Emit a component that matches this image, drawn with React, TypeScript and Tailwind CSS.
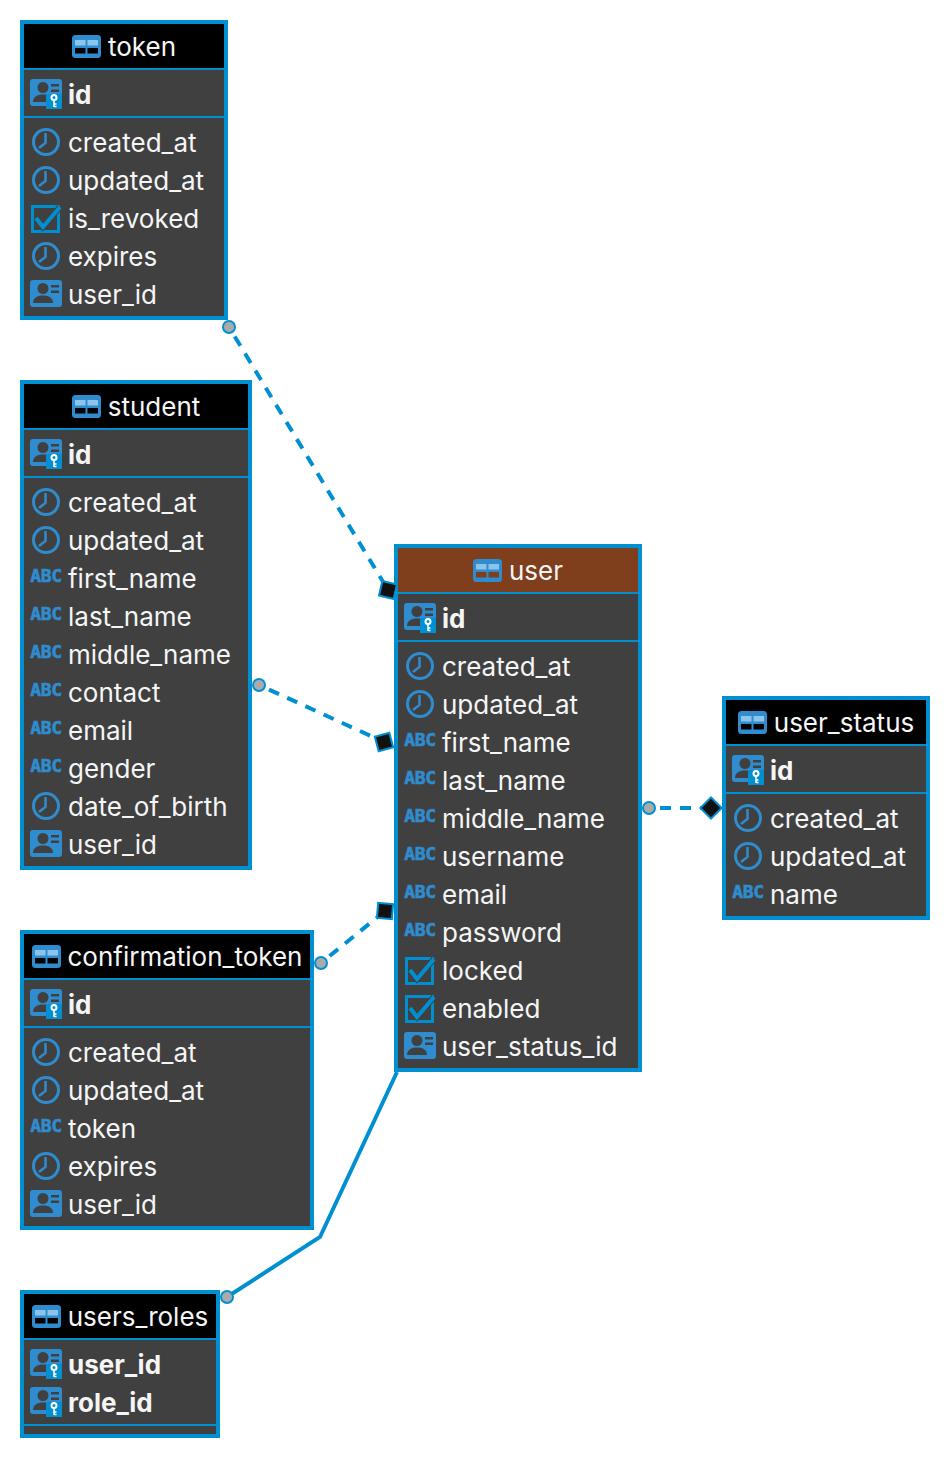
type ColumnType = "clock" | "check" | "abc" | "user";

type Column = { name: string; type: ColumnType };

type Table = {
  name: string;
  position: string;
  width: string;
  headerBg: string;
  cutout: string;
  keys: string[];
  columns: Column[];
};

const blue = "#2f8ccf";

const tables: Table[] = [
  {
    name: "token",
    position: "left-[20px] top-[20px]",
    width: "w-[208px]",
    headerBg: "bg-black",
    cutout: "#000000",
    keys: ["id"],
    columns: [
      { name: "created_at", type: "clock" },
      { name: "updated_at", type: "clock" },
      { name: "is_revoked", type: "check" },
      { name: "expires", type: "clock" },
      { name: "user_id", type: "user" },
    ],
  },
  {
    name: "student",
    position: "left-[20px] top-[380px]",
    width: "w-[232px]",
    headerBg: "bg-black",
    cutout: "#000000",
    keys: ["id"],
    columns: [
      { name: "created_at", type: "clock" },
      { name: "updated_at", type: "clock" },
      { name: "first_name", type: "abc" },
      { name: "last_name", type: "abc" },
      { name: "middle_name", type: "abc" },
      { name: "contact", type: "abc" },
      { name: "email", type: "abc" },
      { name: "gender", type: "abc" },
      { name: "date_of_birth", type: "clock" },
      { name: "user_id", type: "user" },
    ],
  },
  {
    name: "user",
    position: "left-[394px] top-[544px]",
    width: "w-[248px]",
    headerBg: "bg-[#7f3f1d]",
    cutout: "#7f3f1d",
    keys: ["id"],
    columns: [
      { name: "created_at", type: "clock" },
      { name: "updated_at", type: "clock" },
      { name: "first_name", type: "abc" },
      { name: "last_name", type: "abc" },
      { name: "middle_name", type: "abc" },
      { name: "username", type: "abc" },
      { name: "email", type: "abc" },
      { name: "password", type: "abc" },
      { name: "locked", type: "check" },
      { name: "enabled", type: "check" },
      { name: "user_status_id", type: "user" },
    ],
  },
  {
    name: "user_status",
    position: "left-[722px] top-[696px]",
    width: "w-[208px]",
    headerBg: "bg-black",
    cutout: "#000000",
    keys: ["id"],
    columns: [
      { name: "created_at", type: "clock" },
      { name: "updated_at", type: "clock" },
      { name: "name", type: "abc" },
    ],
  },
  {
    name: "confirmation_token",
    position: "left-[20px] top-[930px]",
    width: "w-[294px]",
    headerBg: "bg-black",
    cutout: "#000000",
    keys: ["id"],
    columns: [
      { name: "created_at", type: "clock" },
      { name: "updated_at", type: "clock" },
      { name: "token", type: "abc" },
      { name: "expires", type: "clock" },
      { name: "user_id", type: "user" },
    ],
  },
  {
    name: "users_roles",
    position: "left-[20px] top-[1290px]",
    width: "w-[200px]",
    headerBg: "bg-black",
    cutout: "#000000",
    keys: ["user_id", "role_id"],
    columns: [],
  },
];

function TableIcon({ cutout }: { cutout: string }) {
  return (
    <svg width="29" height="23" viewBox="0 0 29 23" className="shrink-0">
      <rect width="29" height="23" rx="3.500" fill={blue} />
      <rect x="3" y="5" width="10.500" height="5.500" fill="#8cc4ec" />
      <rect x="15.500" y="5" width="10.500" height="5.500" fill="#8cc4ec" />
      <rect x="3" y="13" width="10.500" height="5.500" fill={cutout} />
      <rect x="15.500" y="13" width="10.500" height="5.500" fill={cutout} />
    </svg>
  );
}

function PersonCard({ keyed }: { keyed?: boolean }) {
  return (
    <svg width="32" height="30" viewBox="0 0 32 30" className="shrink-0">
      <rect width="32" height="27" rx="3" fill={blue} />
      <circle cx="13" cy="8.500" r="5.500" fill="#404040" />
      <path d="M3 23c0-5 4-7.500 10-7.500s10 2.500 10 7.500z" fill="#404040" />
      <rect x="21" y="5" width="8" height="2.500" fill="#404040" />
      <rect x="21" y="10.500" width="8" height="2.500" fill="#404040" />
      {keyed && (
        <>
          <rect x="16" y="15" width="16" height="15" fill="#0090d2" />
          <circle cx="24" cy="18.500" r="2.500" fill="none" stroke="#fff" strokeWidth="2" />
          <path d="M24 21v7M24 25h2.500M24 27.500h2.500" stroke="#fff" strokeWidth="1.600" />
        </>
      )}
    </svg>
  );
}

function ClockIcon() {
  return (
    <svg width="32" height="30" viewBox="0 0 32 30" className="shrink-0">
      <circle cx="16" cy="14" r="12.500" fill="none" stroke={blue} strokeWidth="3" />
      <path d="M15.500 5V15L9 20" fill="none" stroke={blue} strokeWidth="2.500" />
    </svg>
  );
}

function CheckIcon() {
  return (
    <svg width="32" height="30" viewBox="0 0 32 30" className="shrink-0">
      <rect x="2.500" y="2.500" width="26" height="25" fill="none" stroke="#0090d2" strokeWidth="3" />
      <path d="M6 14l7 9L30 3" fill="none" stroke="#404040" strokeWidth="6" />
      <path d="M6 14l7 9L30 3" fill="none" stroke="#0090d2" strokeWidth="4" />
    </svg>
  );
}

function ColumnIcon({ type }: { type: ColumnType }) {
  if (type === "clock") return <ClockIcon />;
  if (type === "check") return <CheckIcon />;
  if (type === "user") return <PersonCard />;
  return (
    <span className="flex h-[30px] w-8 shrink-0 items-start justify-center font-['DejaVu_Sans_Mono',monospace] text-[18px] leading-[24px] font-bold tracking-[-0.3px] text-[#2f8ccf] [-webkit-text-stroke:0.6px_#2f8ccf]">
      ABC
    </span>
  );
}

function TableNode({ table }: { table: Table }) {
  return (
    <div className={`absolute ${table.position} ${table.width} border-4 border-[#0090d2] bg-[#404040]`}>
      <div className={`flex h-[44px] items-center justify-center gap-[7px] ${table.headerBg}`}>
        <TableIcon cutout={table.cutout} />
        <span className="text-[26px] text-[#f5f5f5]">{table.name}</span>
      </div>
      <div className="border-t-2 border-[#0090d2] pt-[5px] pb-[3px]">
        {table.keys.map((key) => (
          <div key={key} className="flex h-[38px] items-center gap-[6px] pl-[6px]">
            <PersonCard keyed />
            <span className="text-[26px] font-bold text-[#f5f5f5]">{key}</span>
          </div>
        ))}
      </div>
      <div className={`border-t-2 border-[#0090d2] ${table.columns.length > 0 ? "pt-[6px] pb-[2px]" : "h-[10px]"}`}>
        {table.columns.map((column) => (
          <div key={column.name} className="flex h-[38px] items-center gap-[6px] pl-[6px]">
            <ColumnIcon type={column.type} />
            <span className="pb-[2px] text-[26px] text-[#f5f5f5]">{column.name}</span>
          </div>
        ))}
      </div>
    </div>
  );
}

function Terminal({ cx, cy }: { cx: number; cy: number }) {
  return <circle cx={cx} cy={cy} r="6" fill="#aaaaaa" stroke="#0090d2" strokeWidth="2" />;
}

function Marker({ cx, cy, angle }: { cx: number; cy: number; angle: number }) {
  return (
    <rect
      x={cx - 7.500}
      y={cy - 7.500}
      width="15"
      height="15"
      fill="#111111"
      stroke="#0090d2"
      strokeWidth="2"
      transform={`rotate(${angle} ${cx} ${cy})`}
    />
  );
}

function Relations() {
  const dashed = { stroke: "#0090d2", strokeWidth: 4, strokeDasharray: "11 9", strokeDashoffset: 9, fill: "none" };
  return (
    <svg width="950" height="1458" viewBox="0 0 950 1458" className="absolute inset-0">
      <path d="M229 327L388 590" {...dashed} />
      <path d="M259 685L384 742" {...dashed} />
      <path d="M321 963L385 911" {...dashed} />
      <path d="M649 808H711" {...dashed} />
      <path d="M397 1072L320 1237L227 1297" fill="none" stroke="#0090d2" strokeWidth="4" />
      <Terminal cx={229} cy={327} />
      <Terminal cx={259} cy={685} />
      <Terminal cx={321} cy={963} />
      <Terminal cx={649} cy={808} />
      <Terminal cx={227} cy={1297} />
      <Marker cx={388} cy={590} angle={13} />
      <Marker cx={384} cy={742} angle={-15} />
      <Marker cx={385} cy={911} angle={5} />
      <Marker cx={711} cy={808} angle={45} />
    </svg>
  );
}

export default function App() {
  return (
    <div className="relative h-[1458px] w-[950px] overflow-hidden bg-white font-['Inter',sans-serif]">
      {tables.map((table) => (
        <TableNode key={table.name} table={table} />
      ))}
      <Relations />
    </div>
  );
}
